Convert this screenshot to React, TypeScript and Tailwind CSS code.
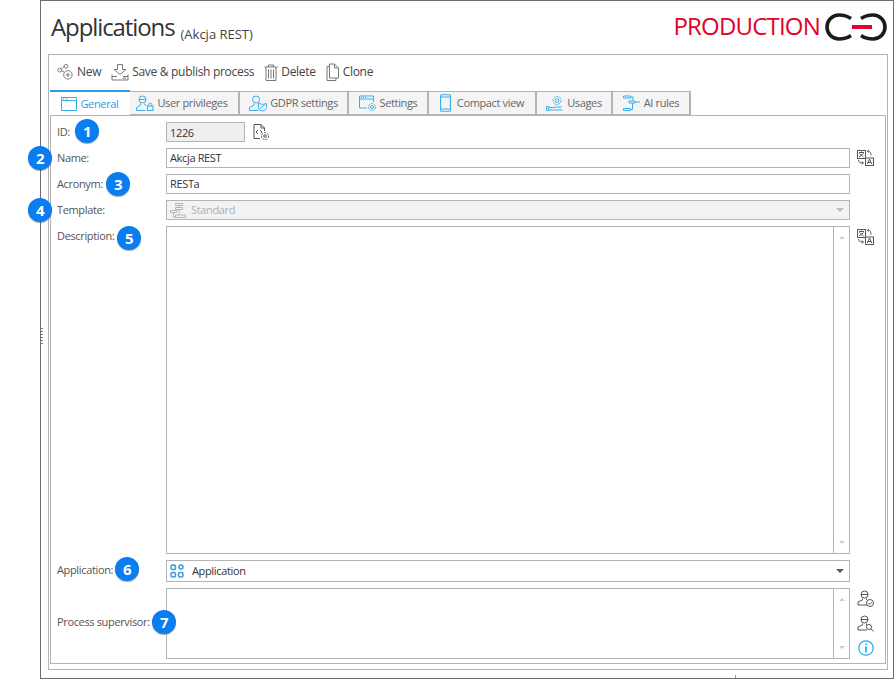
import type { ReactNode } from 'react';

const blue = '#3daee9';

// Line icons from the toolbar and the tab strip
function NewIcon() {
    return (
        <svg width="17" height="18" viewBox="0 0 18 18" fill="none" stroke="#777" strokeWidth="1">
            <circle cx="2.8" cy="7" r="2" />
            <circle cx="9.5" cy="3" r="2" />
            <circle cx="11.5" cy="12" r="4.5" />
            <path d="M4.500 7.500 7.500 9M8 2.500 4.500 6M11.500 9.700v4.600M9.200 12h4.600" />
        </svg>
    );
}

function SaveIcon() {
    return (
        <svg width="18" height="18" viewBox="0 0 18 18" fill="none" stroke="#777" strokeWidth="1">
            <path d="M6.500 1.500h5v5H15l-6 5-6-5h3.500zM1 11.500v5.500h16v-5.500" />
            <path d="M1 13.500h5M12 13.500h5M11.500 15.200h3.500" />
        </svg>
    );
}

function TrashIcon() {
    return (
        <svg width="14" height="17" viewBox="0 0 14 17" fill="none" stroke="#777" strokeWidth="1">
            <path d="M.5 3h13M4.500 3V1h5v2M2 3v13.500h10V3M4.500 5.500v9M7 5.500v9M9.500 5.500v9" />
        </svg>
    );
}

function CloneIcon() {
    return (
        <svg width="14" height="18" viewBox="0 0 14 18" fill="none" stroke="#777" strokeWidth="1">
            <path d="M3.500 1h5l4 4v10h-9zM8.500 1v4h4M3.500 3.500H1v14h9V15" />
        </svg>
    );
}

function WindowIcon() {
    return (
        <svg width="16" height="14" viewBox="0 0 16 14" fill="none" stroke={blue} strokeWidth="1">
            <rect x=".5" y=".5" width="15" height="13" />
            <path d="M.5 3.500h15M2 2h1M4 2h1M6 2h1" />
        </svg>
    );
}

function UserLockIcon() {
    return (
        <svg width="18" height="17" viewBox="0 0 18 16" fill="none" stroke={blue} strokeWidth="1">
            <circle cx="6.500" cy="4" r="3.500" />
            <path d="M3 4h7M4.500 8v1.500L.5 12v3h9M8.500 8v1l2 1" />
            <rect x="11.500" y="10.500" width="5.500" height="4.500" />
            <path d="M12.800 10.500V9a1.400 1.400 0 0 1 2.900 0v1.500" />
        </svg>
    );
}

function UserShieldIcon() {
    return (
        <svg width="18" height="17" viewBox="0 0 18 16" fill="none" stroke={blue} strokeWidth="1">
            <circle cx="7" cy="4" r="3.500" />
            <path d="M5 8v1.500L.5 12v3h9M9.500 7.500l4 1.500 4-1v4c0 2-2 3-4 3.500-2-.5-4-1.500-4-3.500zM11 13l5-4" />
        </svg>
    );
}

function WindowGearIcon() {
    return (
        <svg width="18" height="17" viewBox="0 0 18 16" fill="none" stroke={blue} strokeWidth="1">
            <path d="M8 12.500H.5V.5h14v6M.5 3.500h14M2 2h1M4 2h1M6 2h1" />
            <circle cx="13" cy="11.500" r="1.500" />
            <circle cx="13" cy="11.500" r="3.500" strokeDasharray="2 1" />
        </svg>
    );
}

function PhoneIcon() {
    return (
        <svg width="11" height="18" viewBox="0 0 10 16" fill="none" stroke={blue} strokeWidth="1" className="mr-[3px]">
            <rect x=".5" y=".5" width="9" height="15" rx="1" />
            <path d="M.5 2.500h9M.5 13.500h9" />
        </svg>
    );
}

function HandGearIcon() {
    return (
        <svg width="18" height="17" viewBox="0 0 18 16" fill="none" stroke={blue} strokeWidth="1">
            <circle cx="11" cy="5" r="1.800" />
            <circle cx="11" cy="5" r="4" strokeDasharray="2 1" />
            <path d="M.5 11h2v4h-2zM2.500 12h4l4-.5h5M2.500 14.500h14" />
        </svg>
    );
}

function RulesIcon() {
    return (
        <svg width="18" height="17" viewBox="0 0 18 16" fill="none" stroke={blue} strokeWidth="1">
            <path d="M.5.500h7v2h-7zM6 5.500h6v2H6zM.5 13h7v2h-7zM7.500 1.500H10v4M9.500 7.500V14H7.500M12 6.500h5" />
        </svg>
    );
}

function TranslateIcon() {
    return (
        <svg width="17" height="16" viewBox="0 0 17 16" fill="none" stroke="#555" strokeWidth="1">
            <rect x=".5" y=".5" width="8" height="8" />
            <path d="M2 2.500h5M4.500 1.500v1M2.500 3.500l4 3.500M6.500 3.500 2 7" />
            <rect x="8.500" y="8" width="8" height="7.500" />
            <path d="m10.300 14 2.200-5 2.200 5M11 12.500h3M11 1c1.500.2 3 1 3 4.500M11.500 2.500 10.500 1l1.500-.5M1.500 10c0 2 1.500 3 4.500 3M5 11.500 6.500 13 5 14.500" />
        </svg>
    );
}

function IdGearIcon() {
    return (
        <svg width="17" height="17" viewBox="0 0 17 17" fill="none" stroke="#555" strokeWidth="1">
            <path d="M7 14.500H1V.5h7l3.500 3.500v3M8 .5V4h3.500" />
            <path d="M5 6 3 8l2 2M7 6l2 2-1 1" />
            <circle cx="12" cy="12" r="1.300" />
            <circle cx="12" cy="12" r="3.500" strokeDasharray="2 1" />
        </svg>
    );
}

function TemplateIcon() {
    return (
        <svg width="16" height="15" viewBox="0 0 16 15" fill="none" stroke="#b5b5b5" strokeWidth="1">
            <path d="M5.500.500h7v2h-7zM5.500 4.500h7v2h-7zM.5 7.500h6v2h-6zM5.500 12h10v2.500h-10zM9 2.500v2M9 6.500V12M3.500 9.500V14h2" />
        </svg>
    );
}

function AppIcon() {
    return (
        <svg width="14" height="14" viewBox="0 0 14 14" fill="none" stroke="#2f9fe0" strokeWidth="1.500">
            <rect x="1" y="1" width="4.500" height="4.500" rx="1.500" />
            <circle cx="11" cy="3" r="2" />
            <rect x="1" y="8.500" width="4.500" height="4.500" rx="1.500" />
            <rect x="8.500" y="8.500" width="4.500" height="4.500" rx="1.500" />
        </svg>
    );
}

function UserCheckIcon() {
    return (
        <svg width="17" height="17" viewBox="0 0 17 17" fill="none" stroke="#555" strokeWidth="1">
            <circle cx="7.500" cy="4.500" r="3.500" />
            <path d="M4 4.500h7M5.500 8.500V10L1 12v3h9M9.500 8.500V10" />
            <circle cx="13" cy="13" r="3.500" />
            <path d="m11.500 13 1.200 1.200 2-2" />
        </svg>
    );
}

function UserSearchIcon() {
    return (
        <svg width="17" height="17" viewBox="0 0 17 17" fill="none" stroke="#555" strokeWidth="1">
            <circle cx="7.500" cy="4.500" r="3.500" />
            <path d="M4 4.500h7M5.500 8.500V10L1 12v3h9M9.500 8.500V10" />
            <circle cx="12" cy="12" r="2.500" />
            <path d="m14 14 2.500 2.500" />
        </svg>
    );
}

function InfoIcon() {
    return (
        <svg width="16" height="16" viewBox="0 0 16 16" fill="none" stroke="#1ea7f0" strokeWidth="1.200">
            <circle cx="8" cy="8" r="7.200" />
            <path d="M8 6.500v6" strokeWidth="1.600" />
            <path d="M8 3.500v1.600" strokeWidth="1.600" />
        </svg>
    );
}

function Logo() {
    return (
        <svg width="64" height="30" viewBox="0 0 64 30" fill="none">
            <path d="M27 6.500C24 4.500 20 3 15 3A12 12 0 0 0 15 27C20 27 24 25.500 27 23.500" stroke="#1b1b1b" strokeWidth="3.600" />
            <path d="M37 6.500C40 4.500 44 3 49 3A12 12 0 0 1 49 27C44 27 40 25.500 37 23.500" stroke="#1b1b1b" strokeWidth="3.600" />
            <path d="M28 15h20" stroke="#e4002b" strokeWidth="4" />
        </svg>
    );
}

function Badge({ n, className }: { n: number; className: string }) {
    return (
        <span
            className={`absolute flex h-6 w-6 items-center justify-center rounded-full bg-[#0a7df0] text-[15px] font-bold text-white shadow-[0_1px_1px_rgba(0,0,0,0.35)] ${className}`}
        >
            {n}
        </span>
    );
}

function ToolButton({ icon, label }: { icon: ReactNode; label: string }) {
    return (
        <div className="flex items-center gap-[3px] text-[#444]">
            {icon}
            <span>{label}</span>
        </div>
    );
}

function Tab({ icon, label, width, active }: { icon: ReactNode; label: string; width: string; active?: boolean }) {
    if (active) {
        return (
            <div className={`-mb-px flex h-[26px] items-center justify-center gap-[3px] border-t-2 border-[#2b9be8] bg-white text-[#2b9be8] ${width}`}>
                {icon}
                <span>{label}</span>
            </div>
        );
    }
    return (
        <div className={`flex h-6 items-center justify-center gap-[3px] border-y border-r-2 border-[#b4b4b4] bg-[#f4f4f4] text-[#666] ${width}`}>
            {icon}
            <span>{label}</span>
        </div>
    );
}

function Row({ label, height, children, side }: { label: string; height: string; children: ReactNode; side?: ReactNode }) {
    return (
        <div className={`flex ${height} mb-[6px]`}>
            <div className="w-[109px] pt-px leading-[18px] text-[#555]">{label}</div>
            <div className="w-[684px] shrink-0">{children}</div>
            <div className="flex w-[30px] flex-col items-center pl-px pt-[2px]">{side}</div>
        </div>
    );
}

function ScrollBar() {
    return (
        <div className="flex h-full w-4 flex-col items-center justify-between border-l border-[#b4b4b4] py-[9px]">
            <span className="h-0 w-0 border-x-[3px] border-b-[3px] border-x-transparent border-b-[#ccc]" />
            <span className="h-0 w-0 border-x-[3px] border-t-[3px] border-x-transparent border-t-[#ccc]" />
        </div>
    );
}

export default function App() {
    return (
        <div className="h-[679px] w-[894px] bg-white pl-10 font-['Open_Sans','Liberation_Sans',sans-serif] text-[11px] tracking-[-0.35px]">
            <div className="relative flex h-[679px] w-[854px] flex-col border border-[#6e6e6e] pl-[7px] pr-[5px]">
                {/* Title bar */}
                <div className="flex h-[53px] shrink-0 items-start">
                    <span className="ml-[3px] mt-[8px] text-[24px] leading-9 tracking-[-1.1px] text-[#333]">Applications</span>
                    <span className="ml-[6px] mt-[23px] text-[13px] leading-5 tracking-normal text-[#444]">(Akcja REST)</span>
                    <span className="ml-auto mt-[7px] text-[24px] leading-9 tracking-[-0.8px] text-[#e4002b]">PRODUCTION</span>
                    <div className="ml-[4px] mt-[11px]">
                        <Logo />
                    </div>
                </div>

                {/* Outer panel */}
                <div className="flex h-[616px] w-[840px] flex-col border border-[#b4b4b4] px-px pb-[5px]">
                    <div className="flex h-[35px] shrink-0 items-center gap-[10px] pb-[1px] pl-[7px] text-[12px] tracking-[-0.3px]">
                        <ToolButton icon={<NewIcon />} label="New" />
                        <ToolButton icon={<SaveIcon />} label="Save & publish process" />
                        <ToolButton icon={<TrashIcon />} label="Delete" />
                        <ToolButton icon={<CloneIcon />} label="Clone" />
                    </div>

                    <div className="flex h-[25px] shrink-0 items-end">
                        <Tab active icon={<WindowIcon />} label="General" width="w-20" />
                        <Tab icon={<UserLockIcon />} label="User privileges" width="w-[110px] pr-[4px]" />
                        <Tab icon={<UserShieldIcon />} label="GDPR settings" width="w-[109px]" />
                        <Tab icon={<WindowGearIcon />} label="Settings" width="w-20" />
                        <Tab icon={<PhoneIcon />} label="Compact view" width="w-[108px]" />
                        <Tab icon={<HandGearIcon />} label="Usages" width="w-[76px]" />
                        <Tab icon={<RulesIcon />} label="AI rules" width="w-[78px]" />
                    </div>

                    {/* Tab content */}
                    <div className="flex-1 border border-[#b4b4b4] pl-[6px] pt-[6px] text-[#333]">
                        <Row label="ID:" height="h-5">
                            <div className="flex items-center gap-[8px]">
                                <div className="flex h-5 w-[79px] items-center border border-[#b4b4b4] bg-[#efefef] pl-[3px] leading-none">1226</div>
                                <IdGearIcon />
                            </div>
                        </Row>
                        <Row label="Name:" height="h-5" side={<TranslateIcon />}>
                            <div className="flex h-5 items-center border border-[#b4b4b4] pl-[3px]">Akcja REST</div>
                        </Row>
                        <Row label="Acronym:" height="h-5">
                            <div className="flex h-5 items-center border border-[#b4b4b4] pl-[3px]">RESTa</div>
                        </Row>
                        <Row label="Template:" height="h-5">
                            <div className="flex h-5 items-center gap-[5px] border border-[#b4b4b4] bg-[#f3f3f3] pl-[3px] pr-[5px] text-[#b0b0b0]">
                                <TemplateIcon />
                                <span>Standard</span>
                                <span className="ml-auto h-0 w-0 border-x-4 border-t-4 border-x-transparent border-t-[#bbb]" />
                            </div>
                        </Row>
                        <Row
                            label="Description:"
                            height="h-[328px]"
                            side={
                                <div className="mt-px">
                                    <TranslateIcon />
                                </div>
                            }
                        >
                            <div className="flex h-full justify-end border border-[#b4b4b4]">
                                <ScrollBar />
                            </div>
                        </Row>
                        <Row label="Application:" height="h-[22px]">
                            <div className="flex h-[22px] items-center gap-[8px] border border-[#b4b4b4] pl-[3px] pr-[5px]">
                                <AppIcon />
                                <span>Application</span>
                                <span className="ml-auto h-0 w-0 border-x-4 border-t-4 border-x-transparent border-t-[#555]" />
                            </div>
                        </Row>
                        <div className="flex h-[71px]">
                            <div className="flex w-[109px] items-center pb-[2px] text-[#555]">Process supervisor:</div>
                            <div className="flex h-full w-[684px] shrink-0 justify-end border border-[#b4b4b4]">
                                <ScrollBar />
                            </div>
                            <div className="flex w-[30px] flex-col items-center gap-[8px] pl-px pt-[2px]">
                                <UserCheckIcon />
                                <UserSearchIcon />
                                <InfoIcon />
                            </div>
                        </div>
                    </div>
                </div>

                {/* Numbered callouts */}
                <Badge n={1} className="left-[34px] top-[118px]" />
                <Badge n={2} className="left-[-13px] top-[145px]" />
                <Badge n={3} className="left-[65px] top-[171px]" />
                <Badge n={4} className="left-[-13px] top-[197px]" />
                <Badge n={5} className="left-[76px] top-[225px]" />
                <Badge n={6} className="left-[74px] top-[556px]" />
                <Badge n={7} className="left-[111px] top-[609px]" />

                {/* Resize grip on the left edge, tick on the bottom edge */}
                <div className="absolute left-0 top-[327px] flex flex-col gap-[2px]">
                    {[0, 1, 2, 3, 4, 5].map((i) => (
                        <span key={i} className="h-px w-[2px] bg-[#777]" />
                    ))}
                </div>
                <span className="absolute bottom-0 left-[694px] h-[3px] w-px bg-[#999]" />
            </div>
        </div>
    );
}
